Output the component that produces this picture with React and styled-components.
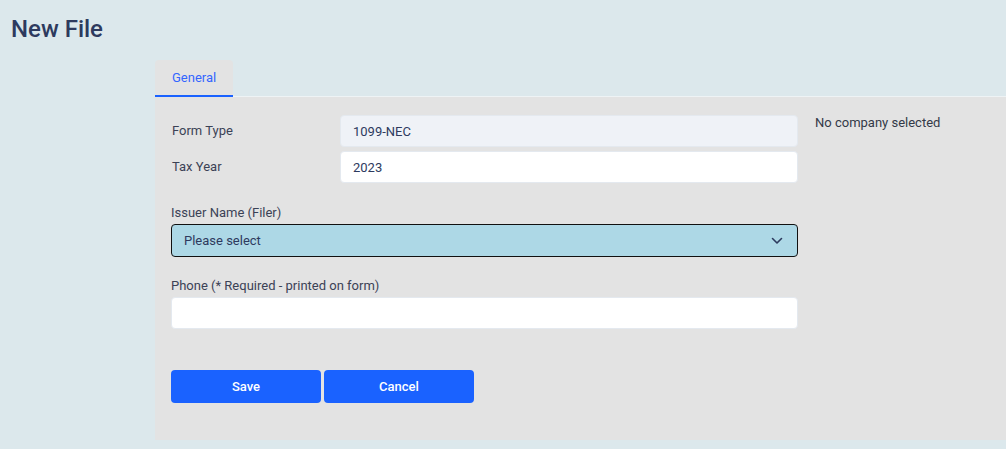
import React from "react";
import styled, { createGlobalStyle } from "styled-components";

const Global = createGlobalStyle`
  html, body { margin: 0; padding: 0; background: #dce8ec; }
  body { font-family: Roboto, "Liberation Sans", sans-serif; }
  * { box-sizing: border-box; }
`;

const Page = styled.div`
  min-height: 449px;
  padding: 16px 0 0 0;
`;

const Title = styled.h1`
  margin: 0 0 0 11px;
  font-size: 24px;
  line-height: 26px;
  font-weight: 500;
  color: #2d3a5e;
`;

const Content = styled.div`
  margin: 18px 0 0 155px;
`;

const TabBar = styled.div`
  display: flex;
  border-bottom: 1px solid #eef3f5;
`;

const Tab = styled.div`
  padding: 0 17px;
  height: 37px;
  display: flex;
  align-items: center;
  font-size: 13px;
  color: ${(p) => (p.$active ? "#3366ff" : "#444")};
  background: #e3e3e3;
  border-radius: 4px 4px 0 0;
  border-bottom: 2px solid ${(p) => (p.$active ? "#1a62ff" : "transparent")};
  margin-bottom: -1px;
`;

const Panel = styled.div`
  background: #e3e3e3;
  padding: 18px 0 37px 16px;
  display: flex;
  gap: 17px;
`;

const FormCol = styled.div`
  width: 627px;
  display: flex;
  flex-direction: column;
`;

const InlineRow = styled.div`
  display: grid;
  grid-template-columns: 169px 1fr;
  align-items: center;
  margin-bottom: 4px;
`;

const Label = styled.label`
  font-size: 13px;
  line-height: 16px;
  color: #3b4256;
  padding-left: 1px;
`;

const StackLabel = styled(Label)`
  display: block;
  margin-top: ${(p) => p.$top}px;
  margin-bottom: 3px;
  padding-left: 0;
`;

const Input = styled.div`
  height: 32px;
  border-radius: 4px;
  border: 1px solid #e4e9ef;
  background: ${(p) => (p.$readonly ? "#eff2f7" : "#ffffff")};
  display: flex;
  align-items: center;
  padding: 0 12px;
  font-size: 13px;
  color: #2d3a5e;
`;

const Select = styled.div`
  height: 33px;
  border-radius: 4px;
  border: 1px solid #111;
  background: #add8e6;
  display: flex;
  align-items: center;
  justify-content: space-between;
  padding: 0 14px 0 12px;
  font-size: 13px;
  color: #2d3a5e;
`;

const Buttons = styled.div`
  display: flex;
  gap: 3px;
  margin-top: 41px;
`;

const Button = styled.button`
  width: 150px;
  height: 33px;
  border: none;
  border-radius: 4px;
  background: #1a62ff;
  color: #fff;
  font-family: Roboto, "Liberation Sans", sans-serif;
  font-size: 13px;
  font-weight: 500;
  cursor: pointer;
`;

const Side = styled.div`
  font-size: 13px;
  line-height: 16px;
  color: #333a48;
`;

const Chevron = () => (
  <svg width="12" height="8" viewBox="0 0 12 8" fill="none">
    <path d="M1.5 1.5 L6 6 L10.5 1.5" stroke="#2d3a5e" strokeWidth="1.6" strokeLinecap="round" strokeLinejoin="round" />
  </svg>
);

export default function App() {
  return (
    <>
      <Global />
      <Page>
        <Title>New File</Title>
        <Content>
          <TabBar>
            <Tab $active>General</Tab>
          </TabBar>
          <Panel>
            <FormCol>
              <InlineRow>
                <Label>Form Type</Label>
                <Input $readonly>1099-NEC</Input>
              </InlineRow>
              <InlineRow>
                <Label>Tax Year</Label>
                <Input>2023</Input>
              </InlineRow>
              <StackLabel $top={18}>Issuer Name (Filer)</StackLabel>
              <Select>
                <span>Please select</span>
                <Chevron />
              </Select>
              <StackLabel $top={21}>Phone (* Required - printed on form)</StackLabel>
              <Input />
              <Buttons>
                <Button>Save</Button>
                <Button>Cancel</Button>
              </Buttons>
            </FormCol>
            <Side>No company selected</Side>
          </Panel>
        </Content>
      </Page>
    </>
  );
}
